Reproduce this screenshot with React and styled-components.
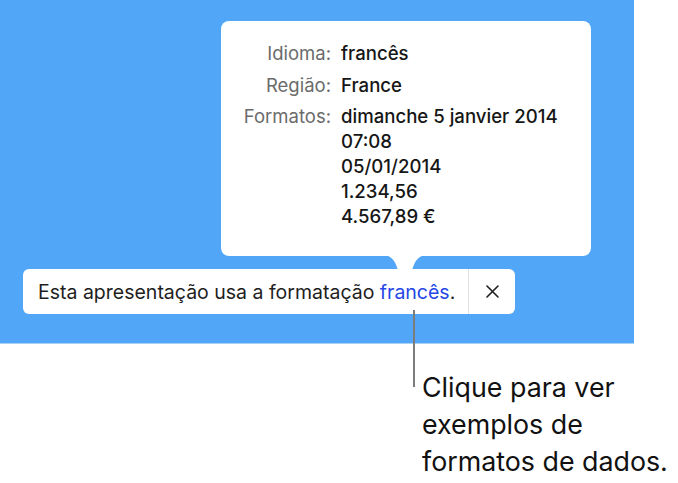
import React from 'react'
import styled, { createGlobalStyle } from 'styled-components';

const GlobalStyle = createGlobalStyle`
  html, body {
    margin: 0;
    padding: 0;
    background: #ffffff;
  }
  body {
    font-family: Inter, "Liberation Sans", sans-serif;
    -webkit-font-smoothing: antialiased;
  }
`;

const Page = styled.div`
  position: relative;
  width: 678px;
  height: 483px;
  overflow: hidden;
`;

const Stage = styled.div`
  width: 634px;
  height: 344px;
  background: #52a6f8;
  border-bottom: 1px solid #a9d2fb;
  box-sizing: border-box;
  display: flex;
  flex-direction: column;
  align-items: flex-start;
  padding-top: 21px;
`;

const Popover = styled.div`
  position: relative;
  margin-left: 221px;
  width: 370px;
  height: 235px;
  box-sizing: border-box;
  background: #ffffff;
  border-radius: 8px;
  padding: 20px 0 0 20px;
  display: grid;
  grid-template-columns: 90px auto;
  column-gap: 10px;
  row-gap: 6.5px;
  align-content: start;
`;

const Arrow = styled.svg`
  position: absolute;
  left: 162px;
  top: 234px;
`;

const Label = styled.div`
  text-align: right;
  color: #6b6b6b;
  font-size: 18.5px;
  line-height: 25px;
`;

const Values = styled.div`
  color: #161616;
  font-size: 18.6px;
  font-weight: 500;
  line-height: 25px;
`;

const Notice = styled.div`
  margin: 13px 0 0 23px;
  width: 492px;
  height: 45px;
  background: #ffffff;
  border-radius: 6px;
  display: flex;
  align-items: stretch;
`;

const NoticeText = styled.div`
  flex: 1;
  display: flex;
  align-items: center;
  padding-left: 15px;
  font-size: 19.5px;
  color: #1e1e1e;
  white-space: nowrap;
  border-right: 1px solid #e2e2e2;
`;

const LinkWord = styled.span`
  color: #2446e6;
  margin-left: 0.28em;
`;

const CloseButton = styled.div`
  width: 46px;
  display: flex;
  align-items: center;
  justify-content: center;
`;

const Leader = styled.div`
  position: absolute;
  left: 413px;
  top: 310px;
  width: 2px;
  height: 77px;
  background: #7c7c7c;
`;

const Callout = styled.div`
  margin: 25px 0 0 422px;
  font-size: 26.8px;
  line-height: 37px;
  color: #111111;
  white-space: nowrap;
`;

const rows = [
  { label: 'Idioma:', values: ['francês'] },
  { label: 'Região:', values: ['France'] },
  {
    label: 'Formatos:',
    values: ['dimanche 5 janvier 2014', '07:08', '05/01/2014', '1.234,56', '4.567,89 €'],
  },
];

export default function App() {
  return (
    <Page>
      <GlobalStyle />
      <Stage>
        <Popover>
          {rows.map((r) => (
            <React.Fragment key={r.label}>
              <Label>{r.label}</Label>
              <Values>
                {r.values.map((v) => (
                  <div key={v}>{v}</div>
                ))}
              </Values>
            </React.Fragment>
          ))}
          <Arrow width="44" height="15" viewBox="0 0 44 15">
            <path d="M0 0 H44 C34 0 31 9 29 15 H15 C13 9 10 0 0 0 Z" fill="#ffffff" />
          </Arrow>
        </Popover>
        <Notice>
          <NoticeText>
            Esta apresentação usa a formatação<LinkWord>francês</LinkWord>.
          </NoticeText>
          <CloseButton>
            <svg width="13" height="13" viewBox="0 0 13 13">
              <path d="M1 1 L12 12 M12 1 L1 12" stroke="#1e1e1e" strokeWidth="1.6" strokeLinecap="round" />
            </svg>
          </CloseButton>
        </Notice>
      </Stage>
      <Leader />
      <Callout>
        Clique para ver
        <br />
        exemplos de
        <br />
        formatos de dados.
      </Callout>
    </Page>
  );
}
